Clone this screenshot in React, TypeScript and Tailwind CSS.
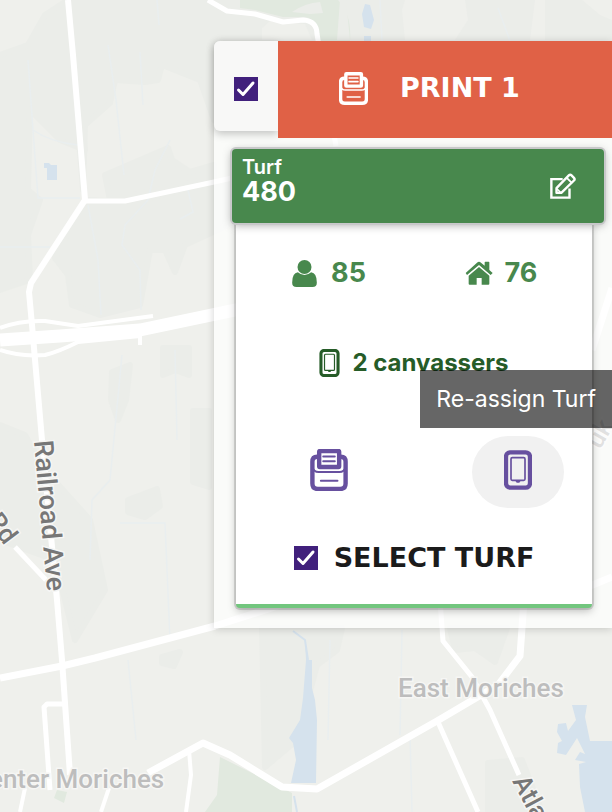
import { useState } from 'react';
import type { ReactNode } from 'react';

interface IconProps {
  className?: string;
}

const PrinterIcon = ({ className }: IconProps) => (
  <svg viewBox="0 0 110 124" fill="none" stroke="currentColor" className={className} aria-hidden="true">
    <path
      d="M22 23 H20 Q6 23 6 38 V102 Q6 118 22 118 H88 Q104 118 104 102 V38 Q104 23 90 23 H88"
      strokeWidth="13"
    />
    <rect x="26" y="6" width="59" height="47" rx="2" strokeWidth="13" />
    <path d="M6 54 Q10 68 24 68 H86 Q100 68 104 54" strokeWidth="6" />
    <path d="M38 22 H72 M38 36 H72 M31 94 H80" strokeWidth="6" strokeLinecap="round" />
  </svg>
);

const TabletIcon = ({ className }: IconProps) => (
  <svg viewBox="0 0 84 118" fill="none" stroke="currentColor" className={className} aria-hidden="true">
    <rect x="6" y="6" width="72" height="106" rx="13" strokeWidth="13" />
    <rect x="21" y="22" width="42" height="68" rx="4" strokeWidth="5" />
    <path d="M34 91 H50 L46 97 H38 Z" fill="currentColor" stroke="none" />
  </svg>
);

const EditIcon = ({ className }: IconProps) => (
  <svg viewBox="0 0 76 76" fill="none" stroke="currentColor" strokeWidth="7" className={className} aria-hidden="true">
    <path d="M37 18 H4 V72 H57 V45" />
    <path d="M19 58 V44 L55 7 Q59 3 63 7 L70 14 Q74 18 70 22 L33 58 Z" strokeLinejoin="round" />
    <path d="M49 14 L63 28 M20 46 L31 57" strokeWidth="5" />
  </svg>
);

const PersonIcon = ({ className }: IconProps) => (
  <svg viewBox="0 0 74 81" fill="currentColor" className={className} aria-hidden="true">
    <circle cx="37" cy="21" r="21" />
    <path d="M17 37 Q26 45 37 45 Q48 45 57 37 Q74 39 74 68 Q74 81 61 81 H13 Q0 81 0 68 Q0 39 17 37 Z" />
  </svg>
);

const HomeIcon = ({ className }: IconProps) => (
  <svg viewBox="0 0 84 70" fill="currentColor" className={className} aria-hidden="true">
    <path d="M42 17 L73 43 V67 Q73 70 70 70 H50 V50 H35 V70 H14 Q11 70 11 67 V43 Z" />
    <path d="M2 35 L36 4 Q42 -1 48 4 L59 13 V3 Q59 1 61 1 H71 Q73 1 73 3 V26 L83 35 L77 41 L42 11 L6 41 Z" />
  </svg>
);

const Checkbox = ({ id, label }: { id: string; label?: string }) => {
  const [checked, setChecked] = useState(true);

  return (
    <span className="grid h-6 w-6 shrink-0">
      <input
        id={id}
        type="checkbox"
        aria-label={label}
        checked={checked}
        onChange={(e) => setChecked(e.target.checked)}
        className="peer col-start-1 row-start-1 h-6 w-6 appearance-none border-2 border-[#41207c] bg-white checked:bg-[#41207c]"
      />
      <svg
        viewBox="0 0 24 24"
        fill="none"
        stroke="white"
        strokeWidth="3"
        className="pointer-events-none invisible col-start-1 row-start-1 h-6 w-6 peer-checked:visible"
        aria-hidden="true"
      >
        <path d="M4.500 13 L9 17.500 L19 6" strokeLinecap="round" strokeLinejoin="round" />
      </svg>
    </span>
  );
};

const MapLabel = ({ transform, fill, size, children }: { transform: string; fill: string; size: number; children: ReactNode }) => (
  <text
    transform={transform}
    fill={fill}
    fontSize={size}
    stroke="#f6f6f4"
    strokeWidth="3"
    paintOrder="stroke"
    className="font-[Roboto,sans-serif] font-medium"
  >
    {children}
  </text>
);

const MapBackground = () => (
  <svg
    viewBox="0 0 612 812"
    preserveAspectRatio="xMinYMin slice"
    className="absolute inset-0 h-full w-full"
    role="img"
    aria-label="Map"
  >
    <rect width="612" height="812" fill="#eff0ec" />

    {/* woodland */}
    <g fill="#ebede9" stroke="#ebede9" strokeWidth="6" strokeLinejoin="round">
      <path d="M68 0 H612 V42 H214 V120 L200 80 L162 65 L158 80 L145 82 L115 80 L110 103 L85 125 L83 190 Z" />
      <path d="M0 55 L28 45 L45 15 L68 0 L85 150 L60 140 L30 110 L28 190 L40 200 L28 235 L30 280 L0 290 Z" />
      <path d="M85 200 L130 202 L228 180 V225 L185 245 L175 272 L165 250 L150 250 L140 305 L100 315 L72 305 L68 275 L55 258 Z" />
      <path d="M168 148 L172 160 L190 172 L214 165 V178 L110 200 L105 175 Z" />
      <path d="M163 348 H189 V375 L175 370 L163 375 Z" />
      <path d="M112 372 L130 365 L126 400 L118 420 L111 400 Z" />
      <path d="M0 425 L25 435 L45 470 L90 520 L105 590 L75 640 L55 560 L0 540 Z" />
      <path d="M128 500 L157 489 L160 506 L145 517 L128 512 Z" />
      <path d="M193 411 H209 V487 L193 482 Z" />
      <path d="M262 628 H342 L337 650 L317 665 L297 740 L265 767 Z" />
      <path d="M450 628 H507 L495 662 L475 648 L455 650 Z" />
      <path d="M488 763 L522 760 L542 812 H488 Z" />
      <path d="M162 657 L180 652 L174 666 L162 663 Z" />
    </g>
    <g fill="#eff0ec">
      <path d="M405 0 H465 L468 20 L455 40 H405 L402 10 Z" />
      <path d="M535 0 H545 V40 H530 Z M582 0 H612 V20 L600 15 Z" />
      <path d="M262 40 V28 L270 21 L305 24 L312 40 Z" />
    </g>
    <g fill="#e1e9df">
      <path d="M240 0 H338 Q352 15 350 41 H320 Q320 20 305 17 L283 17 L255 10 L240 8 Z" />
      <path d="M220 757 L292 793 V812 H205 L217 795 Z" />
      <path d="M57 790 L67 792 L64 803 L54 798 Z" />
    </g>
    <path d="M292 12 Q305 3 320 2 L323 13 L310 14 Z M340 0 H346 L350 40 H337 Z" fill="#ebede9" />

    {/* streams */}
    <g fill="none" stroke="#e9eeef" strokeWidth="1.500">
      <path d="M108 45 L116 100 L124 175 M140 52 L143 105 M170 140 L155 170 L148 200 L125 225 L122 245 L140 270 L141 310" />
      <path d="M28 60 L33 130 Q50 142 78 145 M33 130 L38 198 H80 M88 205 L98 260 L101 315 M0 247 H50" />
      <path d="M157 0 L159 25 M380 0 L382 41 M498 8 L510 41 M188 190 L193 212 L180 219" />
      <path d="M122 355 L110 480 L92 500 L90 560 M175 350 L177 440 M120 523 H165 L170 640 M128 660 L136 740" />
      <path d="M330 640 L328 740 M402 630 L400 735 M410 735 L412 812" />
    </g>
    <path d="M293 631 L305 640 L308 660 M294 796 L297 812" fill="none" stroke="#d5e2ed" strokeWidth="2" />

    {/* water */}
    <g fill="#d5e2ed">
      <path d="M44 163 H49 L51 165 H57 V180 H47 V168 H44 Z" />
      <path d="M365 4 L370 5 L374 20 L371 29 L364 27 L362 14 Z M364 36 H371 V42 H364 Z" />
      <path d="M305 640 L308 660 H312 V688 L315 700 L317 720 L316 783 H291 L296 760 L293 743 L289 738 L300 720 L303 698 L306 660 Z" />
      <path d="M572 705 H587 L585 717 L590 741 H612 V812 H585 L580 787 L579 764 L586 762 L575 760 L580 752 L585 754 L577 738 L566 755 L557 753 L558 743 L562 741 L557 732 L558 724 L566 723 L568 731 L576 720 Z" />
    </g>

    {/* roads */}
    <g fill="none" stroke="#fff" strokeLinejoin="round">
      <path d="M68 0 L73 55 L78 115 L85 200 L31 283 L29 292 L32 325 L42 440 L57 600 L62 660 L70 775" strokeWidth="6" />
      <path d="M85 201 H125 L214 182 L232 178" strokeWidth="5" />
      <path d="M0 340 L60 336 L140 330 L240 309 L420 270" strokeWidth="13" />
      <path d="M0 328 Q20 320 45 321 L78 326 L153 316" strokeWidth="4" />
      <path d="M0 350 Q20 357 45 355 Q58 352 78 342 L140 336 V345" strokeWidth="4" />
      <path d="M208 0 L227 11 L255 14 L283 22 L303 20 Q317 21 317 34 L336 146" strokeWidth="5" />
      <path d="M0 678 L62 666 L95 658 L215 626 L290 602" strokeWidth="7" />
      <path d="M15 547 L46 580 M66 704 H47 L44 707 L50 790" strokeWidth="5" />
      <path d="M148 773 L203 743 L230 755 L282 787 L317 789 L437 721 L498 685 L520 656 L524 600" strokeWidth="7" />
      <path d="M440 600 L443 641 L472 677 L490 710 L519 775 M438 722 L478 812" strokeWidth="5" />
      <path d="M189 750 L191 775 L186 812 M109 788 L101 812 M25 788 L20 812" strokeWidth="4" />
      <path d="M592 350 L612 288 M590 586 L612 577" strokeWidth="7" />
    </g>

    <MapLabel transform="translate(34 441) rotate(85)" fill="#777" size={27}>Railroad Ave</MapLabel>
    <MapLabel transform="translate(-14 521) rotate(53)" fill="#777" size={26}>Rd</MapLabel>
    <MapLabel transform="translate(512 781) rotate(62)" fill="#777" size={26}>Atlantic</MapLabel>
    <MapLabel transform="translate(600 450) rotate(-60)" fill="#999" size={26}>uk</MapLabel>
    <MapLabel transform="translate(398 697)" fill="#bdbdbd" size={26}>East Moriches</MapLabel>
    <MapLabel transform="translate(-28 788)" fill="#bdbdbd" size={26}>Center Moriches</MapLabel>
  </svg>
);

const TurfCard = () => (
  <article className="mt-[11px] mr-2 ml-[18px]">
    <header className="relative flex items-center justify-between rounded-sm bg-[#48884d] pt-2 pr-7 pb-4 pl-[10px] text-white shadow-[0_0_0_2px_#c8c8ca,0_2px_10px_rgba(0,0,0,0.35)]">
      <h2 className="font-bold">
        <span className="block text-xl leading-5 font-semibold">Turf</span>
        <span className="block text-[27px] leading-[30px]">480</span>
      </h2>
      <button type="button" aria-label="Edit turf" className="pt-2">
        <EditIcon className="h-[26px] w-[26px]" />
      </button>
    </header>

    <div className="mr-3 ml-1 rounded-b border-b-4 border-[#72c67e] bg-white pt-8 pb-7 shadow-[0_0_0_2px_rgba(0,0,0,0.12),0_3px_8px_rgba(0,0,0,0.25)]">
      <div className="grid grid-cols-2 text-[27px] leading-9 font-bold text-[#48884d]">
        <div className="flex items-center justify-center gap-[14px] pl-2">
          <PersonIcon className="h-[27px] w-[25px]" />
          85
        </div>
        <div className="flex items-center justify-center gap-3 pr-1">
          <HomeIcon className="h-6 w-7" />
          76
        </div>
      </div>

      <div className="mt-[54px] flex items-center justify-center gap-3 text-2xl leading-9 font-bold text-[#265c28]">
        <TabletIcon className="h-7 w-[21px]" />
        2 canvassers
      </div>

      <div className="mt-[55px] flex justify-between pr-7 pl-[47px] text-[#67509f]">
        <button type="button" aria-label="Print turf" className="flex h-[72px] w-[92px] items-center justify-center rounded-full pb-1">
          <PrinterIcon className="h-[42px] w-[38px]" />
        </button>
        <div className="relative">
          <button
            type="button"
            aria-describedby="reassign-tooltip"
            aria-label="Re-assign"
            className="flex h-[72px] w-[92px] items-center justify-center rounded-full bg-[#f1f1f1] pb-1"
          >
            <TabletIcon className="h-10 w-7" />
          </button>
          <div
            id="reassign-tooltip"
            role="tooltip"
            className="absolute -right-12 bottom-full mb-2 bg-black/60 py-[11px] pr-4 pl-4 text-[23px] leading-9 whitespace-nowrap text-white"
          >
            Re-assign Turf
          </div>
        </div>
      </div>

      <div className="mt-8 flex items-center justify-center gap-4">
        <Checkbox id="select-turf" />
        <label htmlFor="select-turf" className="font-['DejaVu_Sans',sans-serif] text-[27px] leading-9 font-bold text-[#1b1b1b]">
          SELECT TURF
        </label>
      </div>
    </div>
  </article>
);

export default function App() {
  return (
    <div className="relative min-h-screen overflow-hidden font-[Inter,sans-serif]">
      <MapBackground />

      <main className="relative mt-[41px] ml-[214px] rounded-tl-md bg-white/70 pb-5 shadow-[0_1px_8px_rgba(0,0,0,0.18)]">
        <div className="flex items-start">
          <div className="flex h-[90px] w-16 items-center justify-center rounded-l-md bg-[#f8f8f7] pt-1.5 shadow-[0_3px_8px_rgba(0,0,0,0.22)]">
            <Checkbox id="select-all" label="Select all turfs" />
          </div>
          <button
            type="button"
            className="relative flex h-[97px] flex-1 items-center gap-8 bg-[#e06146] pb-0.5 pl-[61px] font-['DejaVu_Sans',sans-serif] text-[27px] font-bold text-white"
          >
            <PrinterIcon className="h-[33px] w-[29px]" />
            PRINT 1
          </button>
        </div>

        <TurfCard />
      </main>
    </div>
  );
}
